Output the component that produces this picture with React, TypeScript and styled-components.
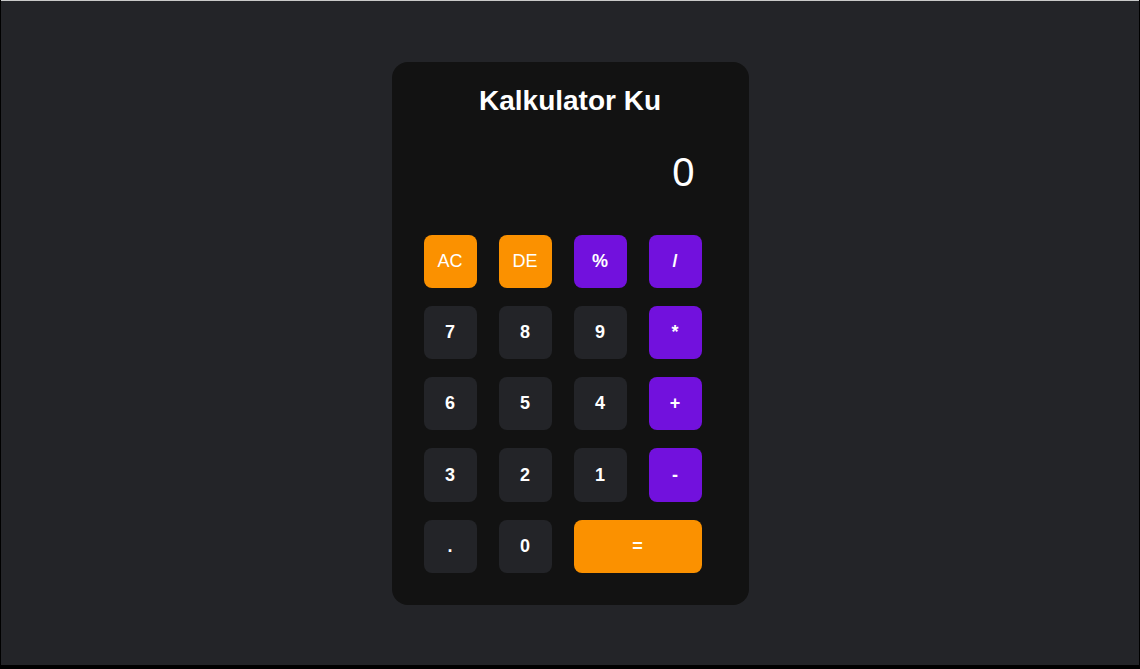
import React, { useState } from 'react';
import styled, { createGlobalStyle, css } from 'styled-components';

const GlobalStyle = createGlobalStyle`
  html, body {
    margin: 0;
    padding: 0;
    background: #000;
  }
  body {
    font-family: "Liberation Sans", Arial, Helvetica, sans-serif;
  }
`;

const Screen = styled.div`
  box-sizing: border-box;
  height: 665px;
  margin: 0 1px;
  border-top: 1px solid #c9c9c9;
  background: #232428;
  display: flex;
  align-items: center;
  justify-content: center;
`;

const Card = styled.div`
  box-sizing: border-box;
  width: 357px;
  height: 543px;
  padding: 23px 32px 32px;
  background: #121212;
  border-radius: 16px;
  display: flex;
  flex-direction: column;
`;

const Title = styled.h1`
  margin: 0;
  font-size: 28px;
  line-height: 32px;
  font-weight: 700;
  color: #ffffff;
  text-align: center;
`;

const Display = styled.div`
  margin: 31px 22px 0 0;
  font-size: 40px;
  line-height: 48px;
  color: #ffffff;
  text-align: right;
`;

const Keypad = styled.div`
  margin-top: 39px;
  align-self: flex-start;
  display: grid;
  grid-template-columns: repeat(4, 53px);
  grid-auto-rows: 53.3px;
  column-gap: 22px;
  row-gap: 18px;
`;

type Tone = 'num' | 'op' | 'fn';

const Key = styled.button<{ $tone: Tone; $wide?: boolean }>`
  border: none;
  border-radius: 8px;
  padding: 0;
  font-family: inherit;
  font-size: 18px;
  font-weight: 700;
  color: #ffffff;
  cursor: pointer;
  display: flex;
  align-items: center;
  justify-content: center;
  background: #232428;
  ${({ $tone }) =>
    $tone === 'op' &&
    css`
      background: #7211dd;
    `}
  ${({ $tone }) =>
    $tone === 'fn' &&
    css`
      background: #fb9100;
      font-weight: 400;
    `}
  ${({ $wide }) =>
    $wide &&
    css`
      grid-column: span 2;
      background: #fb9100;
    `}
`;

const keys: { label: string; tone: Tone; wide?: boolean }[] = [
  { label: 'AC', tone: 'fn' },
  { label: 'DE', tone: 'fn' },
  { label: '%', tone: 'op' },
  { label: '/', tone: 'op' },
  { label: '7', tone: 'num' },
  { label: '8', tone: 'num' },
  { label: '9', tone: 'num' },
  { label: '*', tone: 'op' },
  { label: '6', tone: 'num' },
  { label: '5', tone: 'num' },
  { label: '4', tone: 'num' },
  { label: '+', tone: 'op' },
  { label: '3', tone: 'num' },
  { label: '2', tone: 'num' },
  { label: '1', tone: 'num' },
  { label: '-', tone: 'op' },
  { label: '.', tone: 'num' },
  { label: '0', tone: 'num' },
  { label: '=', tone: 'num', wide: true },
];

export default function App(): JSX.Element {
  const [value] = useState('0');
  return (
    <>
      <GlobalStyle />
      <Screen>
        <Card>
          <Title>Kalkulator Ku</Title>
          <Display>{value}</Display>
          <Keypad>
            {keys.map((k) => (
              <Key key={k.label} $tone={k.tone} $wide={k.wide}>
                {k.label}
              </Key>
            ))}
          </Keypad>
        </Card>
      </Screen>
    </>
  );
}
